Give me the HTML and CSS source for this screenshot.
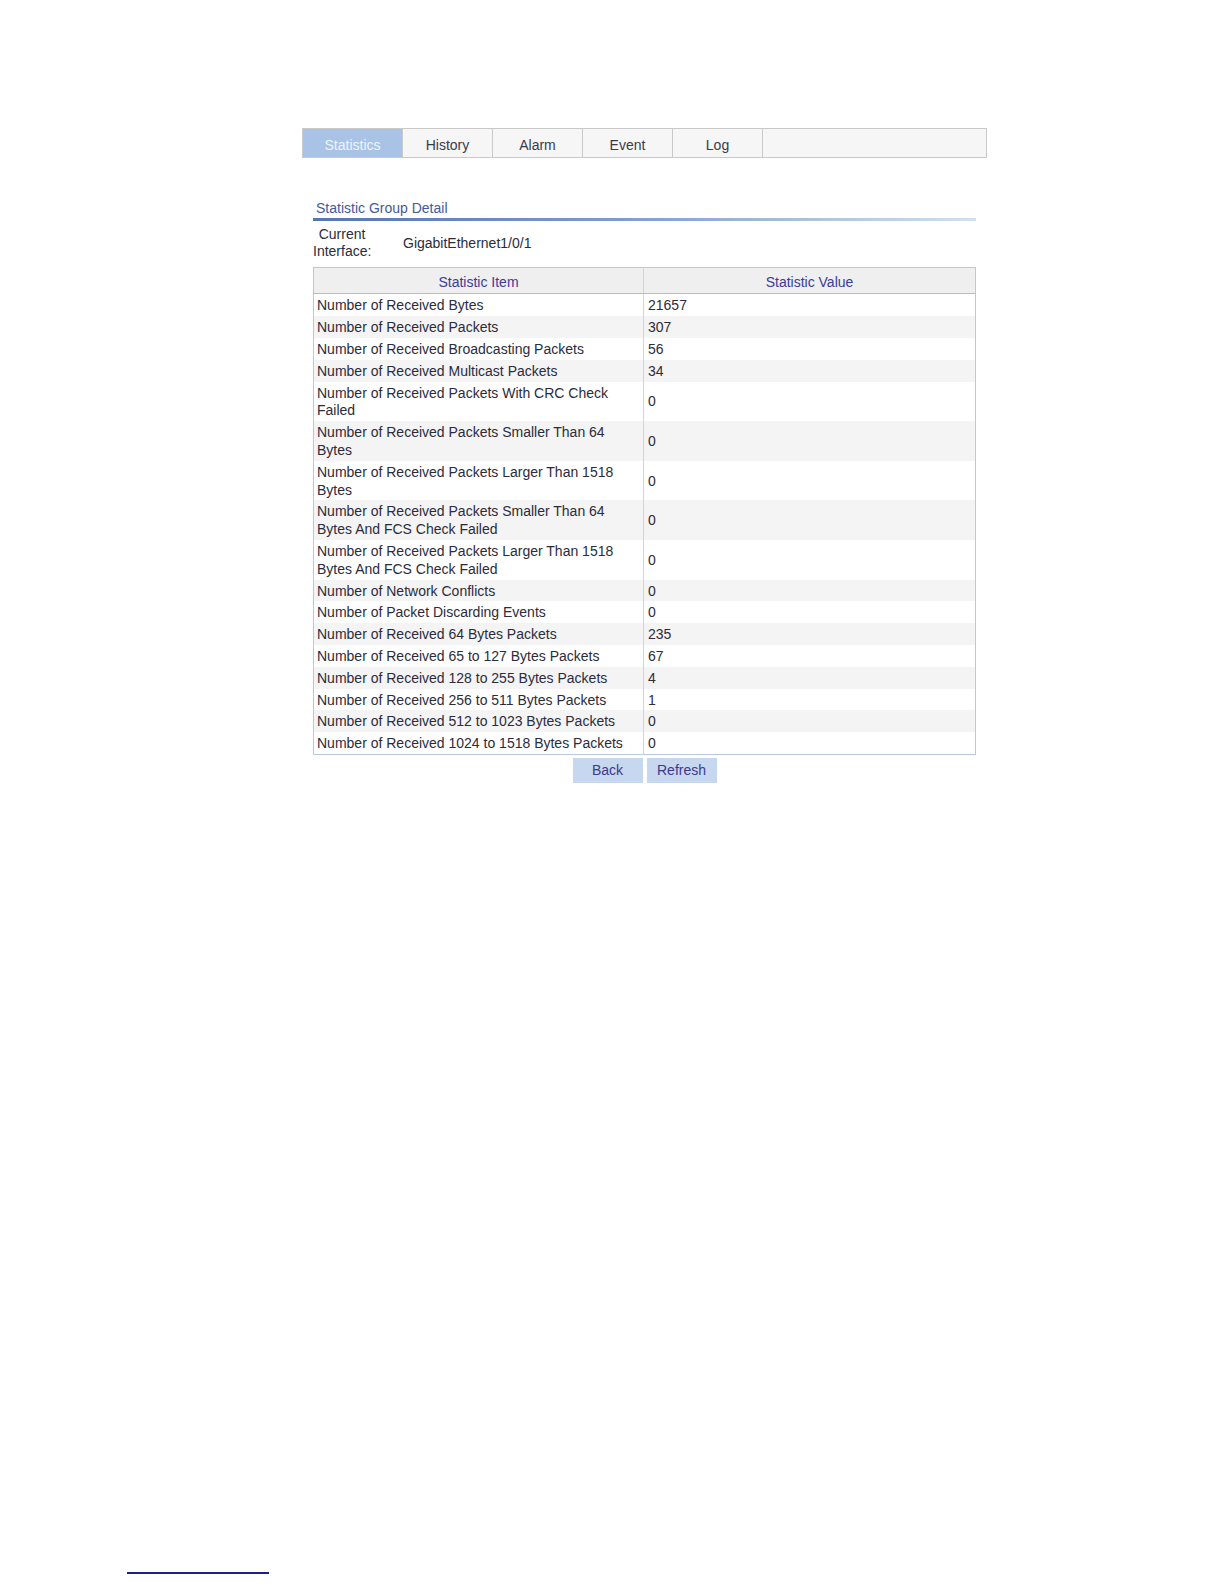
FILE: index.html
```html
<!DOCTYPE html>
<html>
<head>
<meta charset="utf-8">
<link rel="stylesheet" href="styles.css">
</head>
<body>
<div class="page">
  <div class="tabs">
    <div class="tab tab-active tab-first">Statistics</div>
    <div class="tab">History</div>
    <div class="tab">Alarm</div>
    <div class="tab">Event</div>
    <div class="tab">Log</div>
    <div class="tab-rest"></div>
  </div>

  <div class="section">
    <div class="section-title">Statistic Group Detail</div>
    <div class="section-rule"></div>
    <div class="iface">
      <div class="iface-label">Current<br>Interface:</div>
      <div class="iface-value">GigabitEthernet1/0/1</div>
    </div>

    <table class="stats">
      <thead>
        <tr><th>Statistic Item</th><th>Statistic Value</th></tr>
      </thead>
      <tbody>
        <tr><td>Number of Received Bytes</td><td>21657</td></tr>
        <tr><td>Number of Received Packets</td><td>307</td></tr>
        <tr><td>Number of Received Broadcasting Packets</td><td>56</td></tr>
        <tr><td>Number of Received Multicast Packets</td><td>34</td></tr>
        <tr><td>Number of Received Packets With CRC Check<br>Failed</td><td>0</td></tr>
        <tr><td>Number of Received Packets Smaller Than 64<br>Bytes</td><td>0</td></tr>
        <tr><td>Number of Received Packets Larger Than 1518<br>Bytes</td><td>0</td></tr>
        <tr><td>Number of Received Packets Smaller Than 64<br>Bytes And FCS Check Failed</td><td>0</td></tr>
        <tr><td>Number of Received Packets Larger Than 1518<br>Bytes And FCS Check Failed</td><td>0</td></tr>
        <tr><td>Number of Network Conflicts</td><td>0</td></tr>
        <tr><td>Number of Packet Discarding Events</td><td>0</td></tr>
        <tr><td>Number of Received 64 Bytes Packets</td><td>235</td></tr>
        <tr><td>Number of Received 65 to 127 Bytes Packets</td><td>67</td></tr>
        <tr><td>Number of Received 128 to 255 Bytes Packets</td><td>4</td></tr>
        <tr><td>Number of Received 256 to 511 Bytes Packets</td><td>1</td></tr>
        <tr><td>Number of Received 512 to 1023 Bytes Packets</td><td>0</td></tr>
        <tr><td>Number of Received 1024 to 1518 Bytes Packets</td><td>0</td></tr>
      </tbody>
    </table>

    <div class="buttons">
      <button class="btn">Back</button>
      <button class="btn">Refresh</button>
    </div>
  </div>
</div>
<div class="footer-rule"></div>
</body>
</html>
```
FILE: styles.css
```css
html, body {
  margin: 0;
  padding: 0;
  background: #ffffff;
}

body {
  font-family: "Liberation Sans", Arial, sans-serif;
  font-size: 14px;
  color: #2c2b3c;
}

.page {
  padding-top: 128px;
  padding-left: 302px;
}

.tabs {
  display: flex;
  width: 685px;
  height: 30px;
  box-sizing: border-box;
  border: 1px solid #c9c9c9;
  background: #f6f6f6;
}

.tab {
  width: 90px;
  flex: 0 0 auto;
  box-sizing: border-box;
  border-right: 1px solid #c9c9c9;
  text-align: center;
  padding-top: 2px;
  line-height: 28px;
  color: #3a3a4a;
}

.tab-first {
  width: 100px;
}

.tab-active {
  background: #a9c3e7;
  color: #eef3fb;
}

.tab-rest {
  flex: 1 1 auto;
}

.section {
  margin-left: 11px;
  width: 663px;
  margin-top: 41px;
}

.section-title {
  padding-left: 3px;
  line-height: 18px;
  color: #4259a0;
}

.section-rule {
  height: 3px;
  margin-top: 1px;
  background: linear-gradient(to right, #5676ad 0%, #7d9bc8 45%, #b3c8e3 80%, #d2dfef 100%);
}

.iface {
  display: flex;
  align-items: center;
  margin-top: 5px;
}

.iface-label {
  width: 58px;
  text-align: center;
  line-height: 17.2px;
}

.iface-value {
  margin-left: 32px;
}

.stats {
  margin-top: 7px;
  width: 663px;
  border-collapse: collapse;
  border: 1px solid #b7c8e0;
  table-layout: fixed;
}

.stats th {
  background: #efefef;
  color: #3b3b98;
  font-weight: normal;
  height: 26px;
  padding: 3px 0 0;
  box-sizing: border-box;
  text-align: center;
  border-bottom: 1px solid #a9bfdd;
  border-left: 1px solid #c8d5e8;
}

.stats th:first-child,
.stats td:first-child {
  width: 330px;
  border-left: none;
}

.stats td {
  padding: 3px 3px 1px;
  line-height: 17.8px;
  vertical-align: middle;
  border-left: 1px solid #c8d5e8;
}

.stats td + td {
  padding-left: 4px;
}

.stats tbody tr:nth-child(even) td {
  background: #f4f4f4;
}

.buttons {
  display: flex;
  justify-content: center;
  gap: 4px;
  margin-top: 3px;
}

.btn {
  width: 70px;
  height: 25px;
  border: none;
  background: #c7d7f0;
  color: #3a3b8c;
  font-family: "Liberation Sans", Arial, sans-serif;
  font-size: 14px;
  padding: 0;
}

.footer-rule {
  margin-top: 789px;
  margin-left: 127px;
  width: 142px;
  height: 2px;
  background: #1c1e8a;
}
```
